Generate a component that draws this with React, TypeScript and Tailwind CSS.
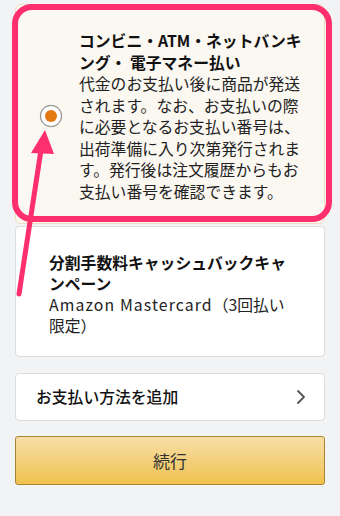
import React from "react";

const jp = { fontFamily: '"Noto Sans CJK JP", "Noto Sans", sans-serif' };

export default function App() {
  return (
    <div
      className="relative w-[340px] h-[516px] overflow-hidden bg-[#f2f3f5] px-[15px] pt-[4px]"
      style={jp}
    >
      {/* Card 1 selected */}
      <div className="flex items-center h-[220px] rounded-[6px] border border-[#f1dcbf] bg-[#fbf7f1] pl-[24px] pr-[20px] pt-[4px]">
        <div className="flex items-center justify-center w-[22px] h-[22px] rounded-full bg-white border border-[#8a8a8a] shadow-[0_0_1px_rgba(0,0,0,0.3)] shrink-0">
          <div className="w-[12px] h-[12px] rounded-full bg-[#e47911]" />
        </div>
        <div className="ml-[17px] text-[15.8px] leading-[21.5px] text-[#111] whitespace-nowrap">
          <div className="font-bold">コンビニ・ATM・ネットバンキ</div>
          <div className="font-bold">ング・ 電子マネー払い</div>
          <div className="text-[#222]">代金のお支払い後に商品が発送</div>
          <div className="text-[#222]">されます。なお、お支払いの際</div>
          <div className="text-[#222]">に必要となるお支払い番号は、</div>
          <div className="text-[#222]">出荷準備に入り次第発行されま</div>
          <div className="text-[#222]">す。発行後は注文履歴からもお</div>
          <div className="text-[#222]">支払い番号を確認できます。</div>
        </div>
      </div>

      {/* Card 2 */}
      <div className="mt-[2px] h-[131px] rounded-[4px] border border-[#dddddd] bg-white pl-[33px] pt-[25px] text-[15.8px] leading-[21px] text-[#111] whitespace-nowrap">
        <div className="font-bold">分割手数料キャッシュバックキャ</div>
        <div className="font-bold">ンペーン</div>
        <div className="text-[#222]">
          <span className="tracking-[1.1px]">Amazon Mastercard</span>（3回払い
        </div>
        <div className="text-[#222]">限定）</div>
      </div>

      {/* Card 3 */}
      <div className="mt-[16px] flex items-center justify-between h-[48px] rounded-[4px] border border-[#dddddd] bg-white pl-[20px] pr-[18px]">
        <span className="text-[15.8px] font-medium text-[#111]">お支払い方法を追加</span>
        <svg width="10" height="16" viewBox="0 0 10 16" fill="none">
          <path d="M2 2l6 6-6 6" stroke="#555" strokeWidth="1.8" strokeLinecap="round" strokeLinejoin="round" />
        </svg>
      </div>

      {/* Continue button */}
      <div className="mt-[15px] flex items-center justify-center h-[49px] rounded-[3px] border border-[#a88734] bg-gradient-to-b from-[#f7dfa5] to-[#f0c14b]">
        <span className="text-[17px] text-[#333]">続行</span>
      </div>

      {/* Annotation overlay */}
      <div className="absolute left-[12px] top-[4px] w-[320px] h-[218px] rounded-[20px] border-[6.5px] border-[#fd2f6d] pointer-events-none" />
      <svg className="absolute left-0 top-0 pointer-events-none" width="340" height="516" viewBox="0 0 340 516">
        <line x1="41" y1="150" x2="19" y2="294" stroke="#fd2f6d" strokeWidth="5" strokeLinecap="round" />
        <polygon points="45,130 31,153 54,154" fill="#fd2f6d" />
      </svg>
    </div>
  );
}
